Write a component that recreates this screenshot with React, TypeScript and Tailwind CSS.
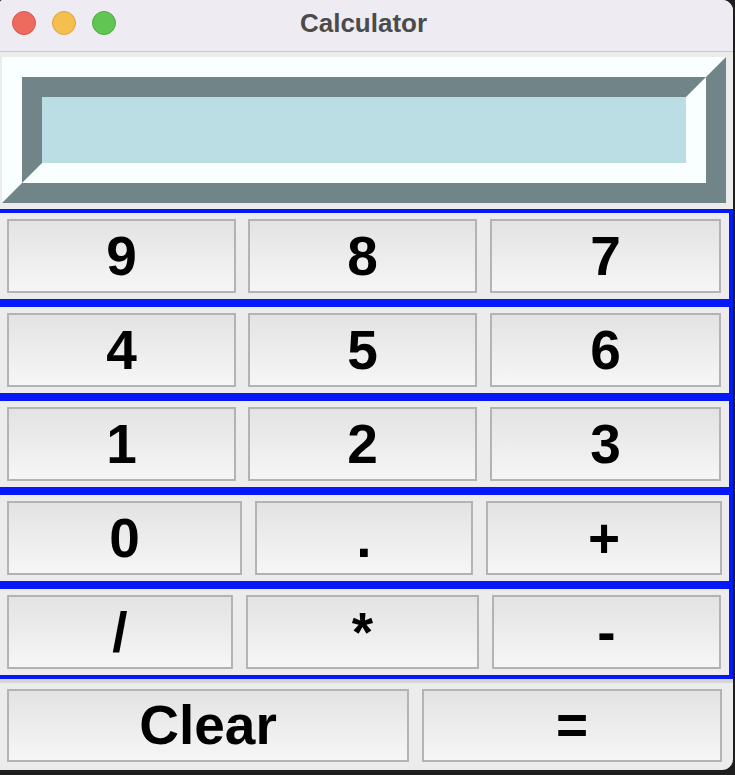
import React from "react";

type Key = { label: string; w: string };

const rows: { gaps: [string, string]; keys: Key[] }[] = [
  {
    gaps: ["ml-[12px]", "ml-[13px]"],
    keys: [
      { label: "9", w: "w-[229px]" },
      { label: "8", w: "w-[229px]" },
      { label: "7", w: "w-[231px]" },
    ],
  },
  {
    gaps: ["ml-[12px]", "ml-[13px]"],
    keys: [
      { label: "4", w: "w-[229px]" },
      { label: "5", w: "w-[229px]" },
      { label: "6", w: "w-[231px]" },
    ],
  },
  {
    gaps: ["ml-[12px]", "ml-[13px]"],
    keys: [
      { label: "1", w: "w-[229px]" },
      { label: "2", w: "w-[229px]" },
      { label: "3", w: "w-[231px]" },
    ],
  },
  {
    gaps: ["ml-[13px]", "ml-[13px]"],
    keys: [
      { label: "0", w: "w-[235px]" },
      { label: ".", w: "w-[218px]" },
      { label: "+", w: "w-[236px]" },
    ],
  },
  {
    gaps: ["ml-[13px]", "ml-[13px]"],
    keys: [
      { label: "/", w: "w-[226px]" },
      { label: "*", w: "w-[233px]" },
      { label: "-", w: "w-[229px]" },
    ],
  },
];

function CalcButton({
  label,
  w,
  h = "h-[74px]",
  className = "",
}: {
  label: string;
  w: string;
  h?: string;
  className?: string;
}) {
  return (
    <button
      className={`${w} ${h} ${className} shrink-0 flex items-center justify-center border-2 border-[#b3b3b3] bg-gradient-to-b from-[#e3e3e3] to-[#f6f6f6] text-black font-bold text-[55px] leading-none font-['Liberation_Sans',Arial,sans-serif]`}
    >
      {label}
    </button>
  );
}

export default function App() {
  return (
    <div className="w-[735px] h-[775px] bg-[#1e1e1e] overflow-hidden">
      <div className="w-[733px] h-[770px] bg-[#ececec] rounded-tr-[11px] rounded-br-[11px] rounded-tl-[3px] overflow-hidden flex flex-col">
        {/* title bar */}
        <div className="relative h-[52px] shrink-0 bg-[#efebf3] border-b border-[#c9c9c9] flex items-start">
          <div className="flex gap-[16px] pl-[12px] pt-[11px]">
            <span className="w-[24px] h-[24px] rounded-full bg-[#ed6a5e] border border-[#d6574b]" />
            <span className="w-[24px] h-[24px] rounded-full bg-[#f5bf4f] border border-[#dba640]" />
            <span className="w-[24px] h-[24px] rounded-full bg-[#61c554] border border-[#50aa42]" />
          </div>
          <div className="absolute left-0 right-[6px] top-[4px] text-center text-[26px] font-bold text-[#4b4b4b] font-['Liberation_Sans',Arial,sans-serif]">
            Calculator
          </div>
        </div>

        {/* display */}
        <div className="pt-[5px] pl-[2px] pr-[7px] pb-[6px]">
          <div className="h-[146px] border-[20px] border-t-[#f8fffe] border-l-[#f8fffe] border-r-[#718589] border-b-[#718589]">
            <div className="h-full border-[20px] border-t-[#718589] border-l-[#718589] border-r-[#f8fffe] border-b-[#f8fffe] bg-[#bbdee4]" />
          </div>
        </div>

        {/* keypad rows */}
        {rows.map((row, i) => (
          <div
            key={i}
            className="h-[94px] shrink-0 border-y-4 border-r-4 border-[#0418f9] pl-[7px] py-[6px] flex"
          >
            {row.keys.map((k, j) => (
              <CalcButton
                key={k.label}
                label={k.label}
                w={k.w}
                className={j > 0 ? row.gaps[j - 1] : ""}
              />
            ))}
          </div>
        ))}

        {/* bottom row */}
        <div className="border-t-4 border-[#d6d6d6] pt-[6px] pl-[7px] flex gap-[13px]">
          <CalcButton label="Clear" w="w-[402px]" h="h-[73px]" />
          <CalcButton label="=" w="w-[300px]" h="h-[73px]" />
        </div>
      </div>
    </div>
  );
}
